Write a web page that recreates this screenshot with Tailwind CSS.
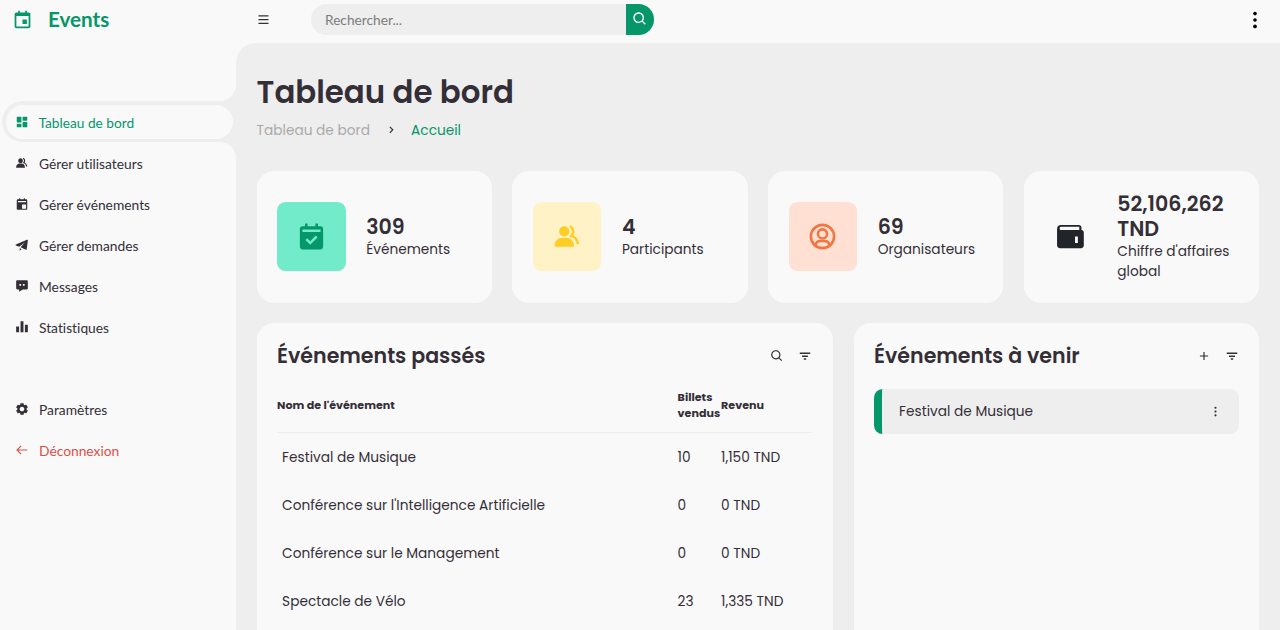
<!DOCTYPE html>
<html lang="fr">
<head>
    <meta charset="UTF-8">
    <meta name="viewport" content="width=device-width, initial-scale=1.0">
    <title>Events - Tableau de bord</title>
    <script src="https://cdn.jsdelivr.net/npm/@tailwindcss/browser@4"></script>
</head>
<body class="flex h-[630px] overflow-hidden bg-[#f9f9f9] text-[#342e37] text-[13.71px] font-[Poppins,Inter,sans-serif]">

    <!-- icons used more than once -->
    <svg class="hidden">
        <symbol id="search" viewBox="0 0 24 24"><path d="M10 18a7.952 7.952 0 0 0 4.897-1.688l4.396 4.396 1.414-1.414-4.396-4.396A7.952 7.952 0 0 0 18 10c0-4.411-3.589-8-8-8s-8 3.589-8 8 3.589 8 8 8zm0-14c3.309 0 6 2.691 6 6s-2.691 6-6 6-6-2.691-6-6 2.691-6 6-6z"/></symbol>
        <symbol id="filter" viewBox="0 0 24 24"><path d="M3 6h18v2.500H3zM7 11h10v2.500H7zM10 16h4v2.500h-4z"/></symbol>
        <symbol id="group" viewBox="0 0 24 24"><path d="M9.500 12c2.206 0 4-1.794 4-4s-1.794-4-4-4-4 1.794-4 4 1.794 4 4 4zm1.500 1H8c-3.309 0-6 2.691-6 6v1h15v-1c0-3.309-2.691-6-6-6z"/><path d="M16.604 11.048a5.670 5.670 0 0 0 .751-3.440c-.179-1.784-1.175-3.361-2.803-4.440l-1.105 1.666c1.119.742 1.800 1.799 1.918 2.974a3.693 3.693 0 0 1-1.072 2.986l-1.192 1.192 1.618.475C18.951 13.701 19 17.957 19 18h2c0-1.789-.956-5.285-4.396-6.952z"/></symbol>
        <symbol id="dots" viewBox="0 0 24 24"><circle cx="12" cy="5" r="2"/><circle cx="12" cy="12" r="2"/><circle cx="12" cy="19" r="2"/></symbol>
    </svg>

    <!-- sidebar -->
    <aside class="w-[236px] shrink-0 text-[13.8px] font-[Lato,sans-serif] [font-variant-ligatures:none]">
        <a href="#" class="flex h-[39px] items-center text-[20.6px] font-bold text-[#059669]">
            <svg class="mb-px ml-[11.500px] mr-[15.500px] size-[21px]" viewBox="0 0 24 24" fill="currentColor" fill-rule="evenodd"><path d="M19 4h-2V2h-2v2H9V2H7v2H5c-1.100 0-2 .9-2 2v14c0 1.100.9 2 2 2h14c1.100 0 2-.9 2-2V6c0-1.100-.9-2-2-2zM5 20V8h14v12zM12 12h5v5h-5z"/></svg>
            <span>Events</span>
        </a>
        <ul class="mt-[62.300px] [&_svg]:mb-[2px]">
            <li class="relative ml-[2px] h-[41px] rounded-l-full bg-[#eee] p-[3.500px]">
                <span class="absolute right-0 -top-[17px] size-[17px] bg-[radial-gradient(circle_at_0_0,transparent_17px,#eee_17.500px)]"></span>
                <span class="absolute right-0 -bottom-[17px] size-[17px] bg-[radial-gradient(circle_at_0_100%,transparent_17px,#eee_17.500px)]"></span>
                <a href="#" class="flex h-full items-center rounded-full bg-[#f9f9f9] pt-[2px] text-[13.71px] text-[#059669]">
                    <svg class="ml-[9px] mr-[10px] size-[14px]" viewBox="0 0 24 24" fill="currentColor"><path d="M4 13h6a1 1 0 0 0 1-1V4a1 1 0 0 0-1-1H4a1 1 0 0 0-1 1v8a1 1 0 0 0 1 1zm-1 7a1 1 0 0 0 1 1h6a1 1 0 0 0 1-1v-4a1 1 0 0 0-1-1H4a1 1 0 0 0-1 1v4zm10 0a1 1 0 0 0 1 1h6a1 1 0 0 0 1-1v-7a1 1 0 0 0-1-1h-6a1 1 0 0 0-1 1v7zm1-10h6a1 1 0 0 0 1-1V4a1 1 0 0 0-1-1h-6a1 1 0 0 0-1 1v5a1 1 0 0 0 1 1z"/></svg>
                    Tableau de bord
                </a>
            </li>
            <li class="flex h-[41.100px] items-center pt-[2px]">
                <svg class="ml-[15px] mr-[10px] size-[14px]" viewBox="0 0 24 24" fill="currentColor"><use href="#group"/></svg>
                Gérer utilisateurs
            </li>
            <li class="flex h-[41.100px] items-center pt-[2px]">
                <svg class="ml-[15px] mr-[10px] size-[14px]" viewBox="0 0 24 24" fill="currentColor" fill-rule="evenodd"><path d="M19 4h-2V2h-2v2H9V2H7v2H5c-1.100 0-2 .9-2 2v14c0 1.100.9 2 2 2h14c1.100 0 2-.9 2-2V6c0-1.100-.9-2-2-2zM5 7h14v2H5zM12 13h7v7h-7z"/></svg>
                Gérer événements
            </li>
            <li class="flex h-[41.100px] items-center pt-[2px]">
                <svg class="ml-[15px] mr-[10px] size-[14px]" viewBox="0 0 24 24" fill="currentColor"><path d="M21.500 3.100a1 1 0 0 0-1-.1l-19 8.100c-.7.3-.7 1.300 0 1.600l5.500 2.300L17 7.500 9.500 16l9.300 4.200a1 1 0 0 0 1.300-.8L22 4.100a1 1 0 0 0-.5-1zM8 17.500V22l3.500-3z"/></svg>
                Gérer demandes
            </li>
            <li class="flex h-[41.100px] items-center pt-[2px]">
                <svg class="ml-[15px] mr-[10px] size-[14px]" viewBox="0 0 24 24" fill="currentColor" fill-rule="evenodd"><path d="M20 2H4c-1.103 0-2 .894-2 1.992v12.016C2 17.106 2.897 18 4 18h3v4l6.351-4H20c1.103 0 2-.894 2-1.992V3.992A1.998 1.998 0 0 0 20 2zM7.500 8.500h3v3h-3zM13.500 8.500h3v3h-3z"/></svg>
                Messages
            </li>
            <li class="flex h-[41.100px] items-center pt-[2px]">
                <svg class="ml-[15px] mr-[10px] size-[14px]" viewBox="0 0 24 24" fill="currentColor"><path d="M2 11h5v10H2zM9.500 2h5v19h-5zM17 8h5v13h-5z"/></svg>
                Statistiques
            </li>
        </ul>
        <ul class="mt-[41px] [&_svg]:mb-[2px]">
            <li class="flex h-[41.100px] items-center pt-[2px]">
                <svg class="ml-[15px] mr-[10px] size-[14px]" viewBox="0 0 24 24" fill="currentColor"><path d="m2.344 15.271 2 3.460a1 1 0 0 0 1.366.365l1.396-.806c.58.457 1.221.832 1.895 1.112V21a1 1 0 0 0 1 1h4a1 1 0 0 0 1-1v-1.598a8.094 8.094 0 0 0 1.895-1.112l1.396.806c.477.275 1.091.11 1.366-.365l2-3.460a1.004 1.004 0 0 0-.365-1.366l-1.372-.793a7.683 7.683 0 0 0-.002-2.224l1.372-.793c.476-.275.641-.89.365-1.366l-2-3.460a1 1 0 0 0-1.366-.365l-1.396.806A8.034 8.034 0 0 0 15 4.598V3a1 1 0 0 0-1-1h-4a1 1 0 0 0-1 1v1.598A8.094 8.094 0 0 0 7.105 5.710L5.710 4.904a.999.999 0 0 0-1.366.365l-2 3.460a1.004 1.004 0 0 0 .365 1.366l1.372.793a7.683 7.683 0 0 0 0 2.224l-1.372.793c-.476.275-.641.89-.365 1.366zM12 8c2.206 0 4 1.794 4 4s-1.794 4-4 4-4-1.794-4-4 1.794-4 4-4z"/></svg>
                Paramètres
            </li>
            <li class="flex h-[41.100px] items-center pt-[2px] text-[#db504a]">
                <svg class="ml-[15px] mr-[10px] size-[14px]" viewBox="0 0 24 24" fill="none" stroke="currentColor" stroke-width="2"><path d="M21 12H4M10.500 5 3.500 12l7 7"/></svg>
                Déconnexion
            </li>
        </ul>
    </aside>

    <div class="flex grow flex-col">
        <!-- navbar -->
        <nav class="flex h-[43px] shrink-0 items-center pb-1 font-[Lato,sans-serif]">
            <svg class="ml-[20px] size-[15px]" viewBox="0 0 24 24" fill="currentColor"><path d="M4 5h16v2H4zM4 11h16v2H4zM4 17h16v2H4z"/></svg>
            <form class="ml-[40px] flex h-[31px] w-[343px]">
                <input type="search" placeholder="Rechercher..." class="w-[315px] rounded-l-full bg-[#eee] px-[14px] pt-px placeholder:text-[#7c7c7c]">
                <button type="button" class="flex w-[28px] items-center justify-center rounded-r-full bg-[#059669] text-[#f9f9f9]">
                    <svg class="mb-px size-4" fill="currentColor"><use href="#search"/></svg>
                </button>
            </form>
            <svg class="ml-auto mr-[14px] size-[22px] text-black" viewBox="0 0 24 24" fill="currentColor"><use href="#dots"/></svg>
        </nav>

        <main class="flex grow flex-col rounded-tl-[20px] bg-[#eee] pl-[20.600px] pr-[21px] pt-[31px]">
            <h1 class="h-[38px] whitespace-nowrap text-[30.860px] font-semibold leading-[38px]">Tableau de bord</h1>
            <div class="mt-[9px] flex h-5 items-center">
                <span class="w-[127px] whitespace-nowrap text-[#aaa]">Tableau de bord</span>
                <svg class="mr-[13.500px] size-[14px]" viewBox="0 0 24 24" fill="none" stroke="currentColor" stroke-width="2"><path d="m10 5 5 5-5 5"/></svg>
                <span class="text-[#059669]">Accueil</span>
            </div>

            <!-- stat cards -->
            <ul class="mt-[30px] grid grid-cols-4 gap-[20.570px]">
                <li class="flex h-[131.500px] items-center rounded-[17px] bg-[#f9f9f9] pl-[20.500px]">
                    <div class="mr-[20.500px] flex size-[68.600px] shrink-0 items-center justify-center rounded-[8.600px] bg-[#71ebc9] text-[#059669]">
                        <svg class="size-[31px]" viewBox="0 0 24 24" fill="currentColor" fill-rule="evenodd"><path d="M19 4h-2V2h-2v2H9V2H7v2H5c-1.100 0-2 .9-2 2v14c0 1.100.9 2 2 2h14c1.100 0 2-.9 2-2V6c0-1.100-.9-2-2-2zM5 6.500h14v2H5zM11 18.400l-3.700-3.700 1.400-1.400 2.300 2.300 4.300-4.300 1.400 1.400z"/></svg>
                    </div>
                    <div>
                        <h3 class="text-[20.570px] font-semibold leading-[25px]">309</h3>
                        <p class="pt-px leading-[20.500px]">Événements</p>
                    </div>
                </li>
                <li class="flex h-[131.500px] items-center rounded-[17px] bg-[#f9f9f9] pl-[20.500px]">
                    <div class="mr-[20.500px] flex size-[68.600px] shrink-0 items-center justify-center rounded-[8.600px] bg-[#fff2c6] text-[#ffce26]">
                        <svg class="size-[31px]" viewBox="0 0 24 24" fill="currentColor"><use href="#group"/></svg>
                    </div>
                    <div>
                        <h3 class="text-[20.570px] font-semibold leading-[25px]">4</h3>
                        <p class="pt-px leading-[20.500px]">Participants</p>
                    </div>
                </li>
                <li class="flex h-[131.500px] items-center rounded-[17px] bg-[#f9f9f9] pl-[20.500px]">
                    <div class="mr-[20.500px] flex size-[68.600px] shrink-0 items-center justify-center rounded-[8.600px] bg-[#ffe0d3] text-[#f07743]">
                        <svg class="size-[31px]" viewBox="0 0 24 24" fill="none" stroke="currentColor" stroke-width="2"><circle cx="12" cy="12" r="9"/><circle cx="12" cy="10" r="3.500"/><path d="M6.500 19c.3-2.500 1.800-3.500 4-3.500h3c2.200 0 3.700 1 4 3.500"/></svg>
                    </div>
                    <div>
                        <h3 class="text-[20.570px] font-semibold leading-[25px]">69</h3>
                        <p class="pt-px leading-[20.500px]">Organisateurs</p>
                    </div>
                </li>
                <li class="flex h-[131.500px] items-center rounded-[17px] bg-[#f9f9f9] pl-[20.500px]">
                    <div class="mr-[20.500px] flex h-[68.600px] w-[52.500px] shrink-0 items-center justify-center text-[#212529]">
                        <svg class="size-[31px]" viewBox="0 0 24 24" fill="currentColor" fill-rule="evenodd"><path d="M20.500 7V5c0-1.100-.9-2-2-2H4.500C2.800 3 1.600 4.300 1.600 6v12.500c0 1.700 1.200 2.500 2.400 2.500h16.300c1.100 0 2-.9 2-2V9c0-1.100-.8-1.900-1.800-2zM4.500 4.500h14.300V7H4.500C3.900 7 3.600 6.400 3.600 5.800s.3-1.300.9-1.300zM15.500 12h2.200v5h-2.200z"/></svg>
                    </div>
                    <div>
                        <h3 class="text-[20.570px] font-semibold leading-[25px]">52,106,262 TND</h3>
                        <p class="pt-px leading-[20.500px]">Chiffre d'affaires global</p>
                    </div>
                </li>
            </ul>

            <div class="mt-[20.500px] flex grow gap-[21px]">
                <!-- past events -->
                <section class="w-[576px] shrink-0 rounded-t-[17px] bg-[#f9f9f9] px-[20.500px] pt-[17px]">
                    <div class="flex h-8 items-center">
                        <h3 class="mr-auto text-[20.570px] font-semibold">Événements passés</h3>
                        <svg class="mr-[14px] size-[14px]" fill="currentColor"><use href="#search"/></svg>
                        <svg class="size-[14px]" fill="currentColor"><use href="#filter"/></svg>
                    </div>
                    <table class="mt-[17px] w-full table-fixed text-left">
                        <thead class="text-[11.140px] leading-4">
                            <tr class="h-[43.500px] border-b border-[#eee]">
                                <th class="w-[400.500px] pb-[11px]">Nom de l'événement</th>
                                <th class="w-[43.500px] pb-[11px]">Billets vendus</th>
                                <th class="pb-[11px]">Revenu</th>
                            </tr>
                        </thead>
                        <tbody>
                            <tr class="h-12"><td class="pl-[5px] pt-[4px]">Festival de Musique</td><td class="pt-[4px]">10</td><td class="pt-[4px]">1,150 TND</td></tr>
                            <tr class="h-12"><td class="pl-[5px] pt-[4px]">Conférence sur l'Intelligence Artificielle</td><td class="pt-[4px]">0</td><td class="pt-[4px]">0 TND</td></tr>
                            <tr class="h-12"><td class="pl-[5px] pt-[4px]">Conférence sur le Management</td><td class="pt-[4px]">0</td><td class="pt-[4px]">0 TND</td></tr>
                            <tr class="h-12"><td class="pl-[5px] pt-[4px]">Spectacle de Vélo</td><td class="pt-[4px]">23</td><td class="pt-[4px]">1,335 TND</td></tr>
                        </tbody>
                    </table>
                </section>

                <!-- upcoming events -->
                <section class="grow rounded-t-[17px] bg-[#f9f9f9] px-[20.500px] pt-[17px]">
                    <div class="flex h-8 items-center">
                        <h3 class="mr-auto text-[20.570px] font-semibold">Événements à venir</h3>
                        <svg class="mr-[14px] size-[14px]" viewBox="0 0 24 24" fill="currentColor"><path d="M19 11h-6V5h-2v6H5v2h6v6h2v-6h6z"/></svg>
                        <svg class="size-[14px]" fill="currentColor"><use href="#filter"/></svg>
                    </div>
                    <div class="mt-[17px] flex h-[44.500px] items-center rounded-[8.600px] border-l-[8.600px] border-[#059669] bg-[#eee] pl-[17px] pr-[17px]">
                        <p class="mr-auto pt-[2px]">Festival de Musique</p>
                        <svg class="size-[13px]" fill="currentColor"><use href="#dots"/></svg>
                    </div>
                </section>
            </div>
        </main>
    </div>

</body>
</html>
